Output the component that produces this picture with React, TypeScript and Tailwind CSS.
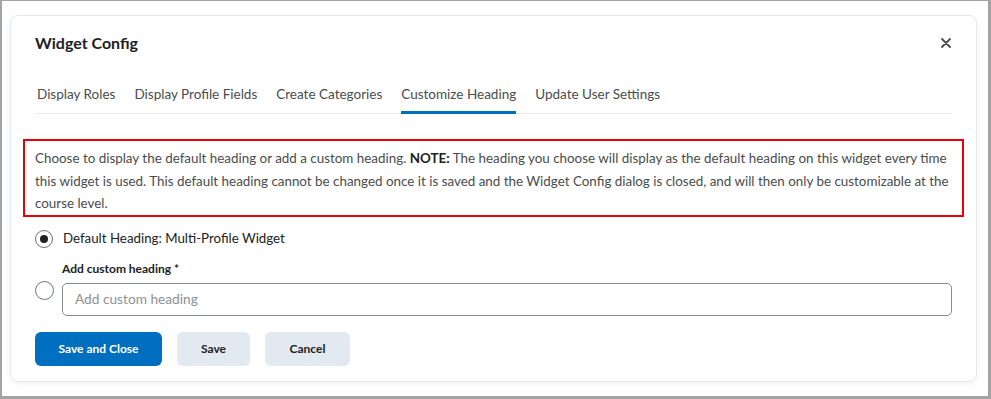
import React from "react";

export default function App() {
  const tabs = ["Display Roles", "Display Profile Fields", "Create Categories", "Customize Heading", "Update User Settings"];
  return (
    <div
      className="w-[991px] h-[399px] bg-white border-l-2 border-t border-r-[3px] border-b-[3px] border-[#a3a3a3] overflow-hidden"
      style={{ fontFamily: "Lato, 'Noto Sans', sans-serif" }}
    >
      <div className="ml-[8px] mt-[14px] w-[967px] h-[367px] rounded-[8px] border border-[#e3e9f1] bg-white shadow-[0_2px_6px_rgba(0,0,0,0.06)] px-[24px] relative">
        <div className="flex items-center justify-between h-[54px]">
          <div className="text-[16px] font-bold text-[#202122]">Widget Config</div>
          <svg width="10" height="10" viewBox="0 0 10 10" className="mr-[1px]">
            <path d="M1 1L9 9M9 1L1 9" stroke="#494c4e" strokeWidth="1.8" strokeLinecap="round" />
          </svg>
        </div>
        <div className="border-b border-[#e3e9f1] flex gap-[19px] pl-[2px] h-[44px] items-end">
          {tabs.map((t, i) => (
            <div
              key={t}
              className={
                "text-[13.5px] text-[#494c4e] " +
                (i === 3 ? "pb-[7px] border-b-[3px] border-[#006fbf] rounded-t-[1px] -mb-[1px]" : "pb-[9px]")
              }
            >
              {t}
            </div>
          ))}
        </div>
        <div className="-mx-[12px] mt-[25px] border-2 border-[#e8000b] px-[10px] pt-[6px] pb-0 text-[13.4px] leading-[22.5px] text-[#494c4e]">
          Choose to display the default heading or add a custom heading. <b className="text-[#202122]">NOTE:</b> The heading you choose will display as the default heading on this widget every time this widget is used. This default heading cannot be changed once it is saved and the Widget Config dialog is closed, and will then only be customizable at the course level.
        </div>
        <div className="flex items-center mt-[12px] h-[20px]">
          <div className="w-[18px] h-[18px] rounded-full border border-[#6e7477] flex items-center justify-center">
            <div className="w-[8px] h-[8px] rounded-full bg-[#202122]" />
          </div>
          <div className="ml-[10px] text-[13.3px] text-[#202122]">Default Heading: Multi-Profile Widget</div>
        </div>
        <div className="flex mt-[11px]">
          <div className="w-[19px] h-[19px] rounded-full border border-[#6e7477] mt-[21px] shrink-0" />
          <div className="ml-[8px] flex-1">
            <div className="text-[12px] font-bold text-[#202122] h-[18px] leading-[18px]">Add custom heading *</div>
            <div className="mt-[5px] h-[33px] rounded-[5px] border border-[#868c8f] flex items-center pl-[12px] text-[13.7px] text-[#8b9196]">
              Add custom heading
            </div>
          </div>
        </div>
        <div className="flex gap-[15px] mt-[16px]">
          <div className="w-[127px] h-[34px] rounded-[6px] bg-[#006fbf] text-white text-[12px] font-bold flex items-center justify-center">Save and Close</div>
          <div className="w-[73px] h-[34px] rounded-[6px] bg-[#e3e9f1] text-[#202122] text-[12px] font-bold flex items-center justify-center">Save</div>
          <div className="w-[85px] h-[34px] rounded-[6px] bg-[#e3e9f1] text-[#202122] text-[12px] font-bold flex items-center justify-center">Cancel</div>
        </div>
      </div>
    </div>
  );
}
